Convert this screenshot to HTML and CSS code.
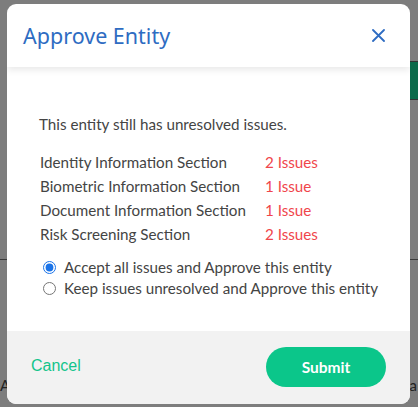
FILE: index.html
```html
<!DOCTYPE html>
<html lang="en">
<head>
  <meta charset="UTF-8">
  <meta name="viewport" content="width=device-width, initial-scale=1.0">
  <title>Approve Entity</title>
  <link rel="stylesheet" href="styles.css">
</head>
<body>

  <!-- page behind the overlay -->
  <div class="backdrop">
    <div class="bg-tab"></div>
    <div class="bg-rule"></div>
    <span class="bg-text bg-left">AN</span>
    <span class="bg-text bg-right">a</span>
  </div>

  <div class="modal">
    <div class="modal-header">
      <h1>Approve Entity</h1>
      <button class="close" type="button" aria-label="Close">
        <svg width="13" height="13" viewBox="0 0 13 13">
          <path d="M1 1 L12 12 M12 1 L1 12" stroke="#2e6cc2" stroke-width="1.8" stroke-linecap="round"/>
        </svg>
      </button>
    </div>

    <div class="modal-body">
      <p class="intro">This entity still has unresolved issues.</p>

      <table class="issues">
        <tr><td>Identity Information Section</td><td class="count">2 Issues</td></tr>
        <tr><td>Biometric Information Section</td><td class="count">1 Issue</td></tr>
        <tr><td>Document Information Section</td><td class="count">1 Issue</td></tr>
        <tr><td>Risk Screening Section</td><td class="count">2 Issues</td></tr>
      </table>

      <div class="choices">
        <label><input type="radio" name="action" checked> Accept all issues and Approve this entity</label>
        <label><input type="radio" name="action"> Keep issues unresolved and Approve this entity</label>
      </div>
    </div>

    <div class="modal-footer">
      <a href="#" class="cancel">Cancel</a>
      <button type="button" class="submit">Submit</button>
    </div>
  </div>

</body>
</html>
```

FILE: styles.css
```css
body {
  margin: 0;
  height: 407px;
  background-color: #7d7d7d;
  font-family: "Source Sans Pro", Lato, "Noto Sans", sans-serif;
  display: flex;
  justify-content: center;
  align-items: center;
  overflow: hidden;
  position: relative;
}

.backdrop {
  position: absolute;
  inset: 0;
}

.bg-tab {
  position: absolute;
  right: 0;
  top: 61px;
  width: 10px;
  height: 37px;
  background-color: #0b6a4a;
  border-top: 1px solid #333;
  border-bottom: 1px solid #333;
}

.bg-rule {
  position: absolute;
  left: 0;
  right: 0;
  top: 259px;
  height: 1px;
  background-color: #3a3a3a;
}

.bg-text {
  position: absolute;
  top: 376px;
  font-family: Lato, sans-serif;
  font-size: 15px;
  color: #222;
}

.bg-left { left: 0; }
.bg-right { right: 1px; }

.modal {
  position: relative;
  width: 403px;
  height: 400px;
  margin-left: -1px;
  background-color: #fff;
  border-radius: 9px;
  overflow: hidden;
  display: flex;
  flex-direction: column;
}

.modal-header {
  height: 63px;
  flex-shrink: 0;
  display: flex;
  align-items: center;
  justify-content: space-between;
  padding: 0 25px 0 16px;
  box-shadow: 0 3px 7px rgba(0, 0, 0, 0.09);
  position: relative;
}

.modal-header h1 {
  margin: 0;
  font-family: "Noto Sans", sans-serif;
  font-weight: 400;
  font-size: 21.5px;
  color: #2e6cc2;
}

.close {
  border: none;
  background: none;
  padding: 0;
  width: 13px;
  height: 13px;
  cursor: pointer;
}

.modal-body {
  flex: 1;
  padding: 48px 20px 0 32px;
  color: #444;
  font-size: 15.2px;
}

.intro {
  margin: 0 0 17px 0;
}

.issues {
  border-collapse: collapse;
  margin-left: 1px;
}

.issues td {
  padding: 0;
  height: 24px;
}

.issues td:first-child {
  width: 225px;
}

.count {
  color: #f0454b;
}

.choices {
  margin-top: 11px;
}

.choices label {
  display: flex;
  align-items: center;
  height: 21px;
}

.choices input {
  margin: 0 8px 0 4px;
  width: 13px;
  height: 13px;
  accent-color: #1a73e8;
}

.modal-footer {
  height: 73px;
  flex-shrink: 0;
  background-color: #f2f2f2;
  display: flex;
  align-items: center;
  justify-content: space-between;
  padding: 0 24px 0 24px;
}

.cancel {
  font-family: "Liberation Sans", Arial, sans-serif;
  font-size: 16px;
  color: #12c48b;
  text-decoration: none;
  margin-top: -2px;
}

.submit {
  width: 120px;
  height: 40px;
  border: none;
  border-radius: 20px;
  background-color: #0bc68a;
  color: #fff;
  font-family: "Source Sans Pro", Lato, sans-serif;
  font-weight: 700;
  font-size: 15.5px;
  cursor: pointer;
}
```
